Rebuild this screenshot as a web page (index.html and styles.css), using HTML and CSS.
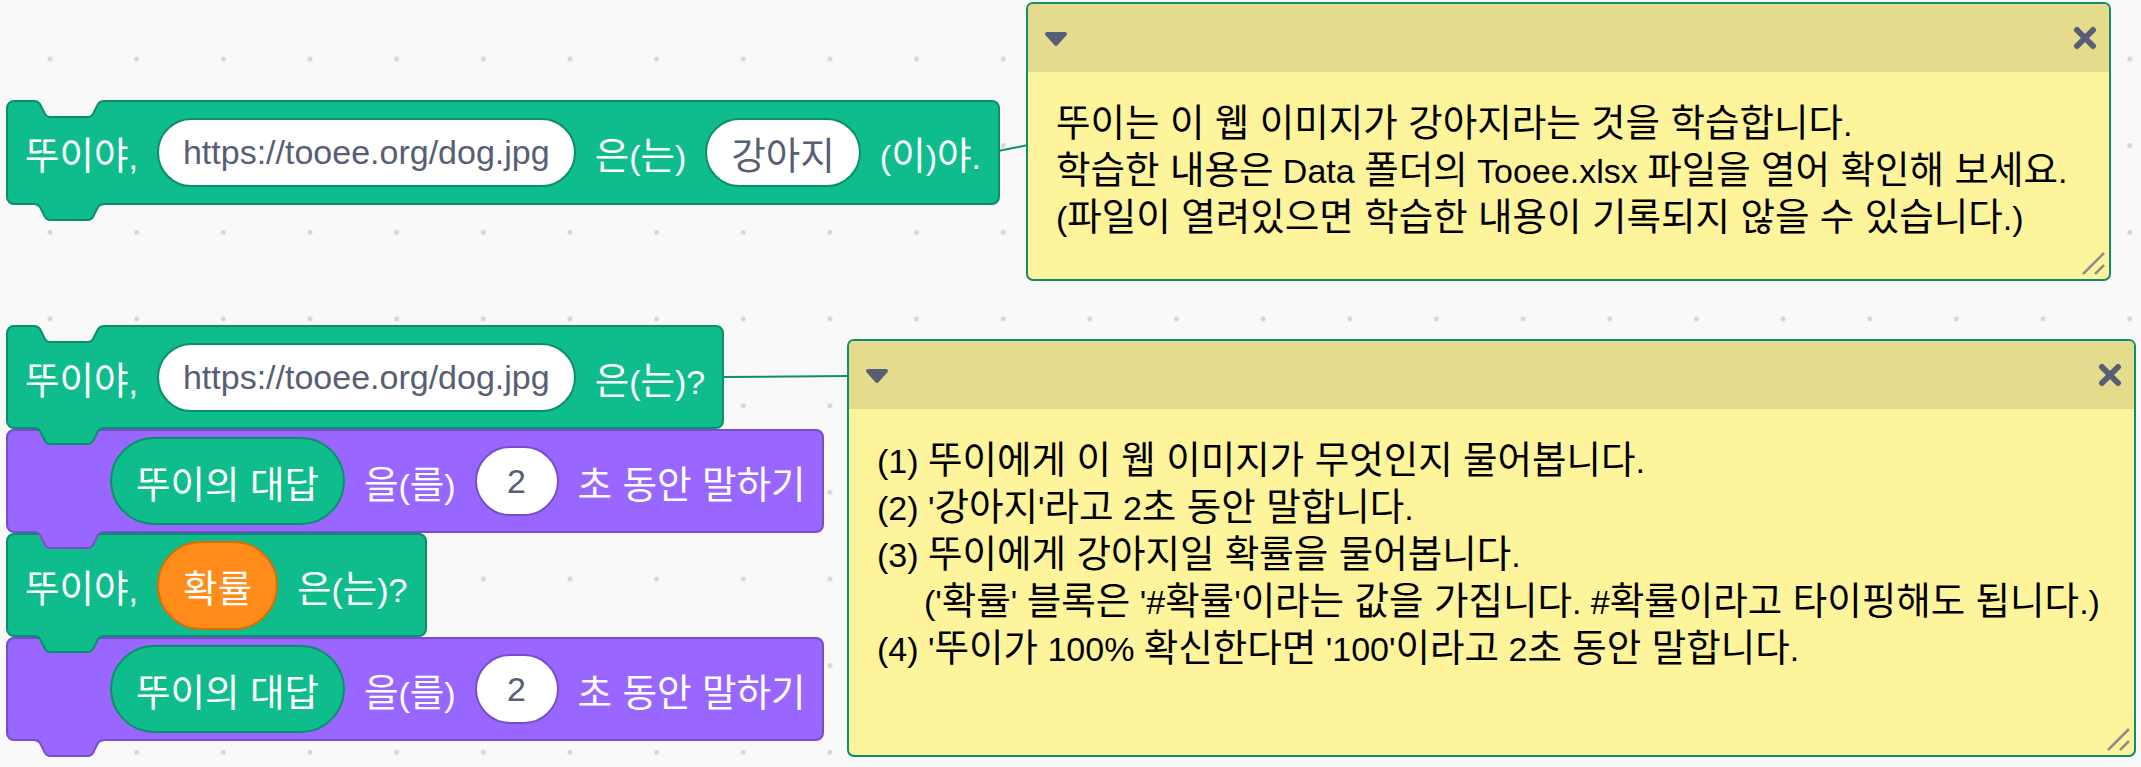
FILE: index.html
```html
<!DOCTYPE html>
<html lang="ko">
<head>
<meta charset="utf-8">
<title>Tooee workspace</title>
<link rel="stylesheet" href="styles.css">
</head>
<body>
<div class="ws">
  <svg class="wires" width="2141" height="767" viewBox="0 0 2141 767">
    <line x1="993" y1="152" x2="1028" y2="145"></line>
    <line x1="722" y1="377" x2="848" y2="376"></line>
  </svg>

  <div class="script s1">
    <div class="blk green tall">
      <svg class="cut" width="70" height="18" viewBox="0 0 70 18"><path class="f" d="M0,0 L0,1 c3,0 4.5,1 6,3 L11,14 c1.2,2 2.5,3 5,3 H54 c2.5,0 3.8,-1 5,-3 L64,4 c1.5,-2 3,-3 6,-3 L70,0 Z"/><path class="s" d="M0,1 c3,0 4.5,1 6,3 L11,14 c1.2,2 2.5,3 5,3 H54 c2.5,0 3.8,-1 5,-3 L64,4 c1.5,-2 3,-3 6,-3"/></svg>
      <span class="lbl"><span class="k">뚜이야</span>,</span>
      <span class="inp">https://tooee.org/dog.jpg</span>
      <span class="lbl"><span class="k">은</span>(<span class="k">는</span>)</span>
      <span class="inp"><span class="k">강아지</span></span>
      <span class="lbl">(<span class="k">이</span>)<span class="k">야</span>.</span>
      <svg class="tab" width="70" height="19" viewBox="0 0 70 19"><path class="f" d="M0,0 L0,1 c3,0 4.5,1 6,3 L11,14 c1.2,2 2.5,3 5,3 H54 c2.5,0 3.8,-1 5,-3 L64,4 c1.5,-2 3,-3 6,-3 L70,0 Z"/><path class="s" d="M0,1 c3,0 4.5,1 6,3 L11,14 c1.2,2 2.5,3 5,3 H54 c2.5,0 3.8,-1 5,-3 L64,4 c1.5,-2 3,-3 6,-3"/></svg>
    </div>
  </div>

  <div class="script s2">
    <div class="blk green">
      <svg class="cut" width="70" height="18" viewBox="0 0 70 18"><path class="f" d="M0,0 L0,1 c3,0 4.5,1 6,3 L11,14 c1.2,2 2.5,3 5,3 H54 c2.5,0 3.8,-1 5,-3 L64,4 c1.5,-2 3,-3 6,-3 L70,0 Z"/><path class="s" d="M0,1 c3,0 4.5,1 6,3 L11,14 c1.2,2 2.5,3 5,3 H54 c2.5,0 3.8,-1 5,-3 L64,4 c1.5,-2 3,-3 6,-3"/></svg>
      <span class="lbl"><span class="k">뚜이야</span>,</span>
      <span class="inp">https://tooee.org/dog.jpg</span>
      <span class="lbl"><span class="k">은</span>(<span class="k">는</span>)?</span>
      <svg class="tab" width="70" height="19" viewBox="0 0 70 19"><path class="f" d="M0,0 L0,1 c3,0 4.5,1 6,3 L11,14 c1.2,2 2.5,3 5,3 H54 c2.5,0 3.8,-1 5,-3 L64,4 c1.5,-2 3,-3 6,-3 L70,0 Z"/><path class="s" d="M0,1 c3,0 4.5,1 6,3 L11,14 c1.2,2 2.5,3 5,3 H54 c2.5,0 3.8,-1 5,-3 L64,4 c1.5,-2 3,-3 6,-3"/></svg>
    </div>
    <div class="blk purple">
      <span class="rep"><span class="k">뚜이의 대답</span></span>
      <span class="lbl"><span class="k">을</span>(<span class="k">를</span>)</span>
      <span class="inp num">2</span>
      <span class="lbl"><span class="k">초 동안 말하기</span></span>
      <svg class="tab" width="70" height="19" viewBox="0 0 70 19"><path class="f" d="M0,0 L0,1 c3,0 4.5,1 6,3 L11,14 c1.2,2 2.5,3 5,3 H54 c2.5,0 3.8,-1 5,-3 L64,4 c1.5,-2 3,-3 6,-3 L70,0 Z"/><path class="s" d="M0,1 c3,0 4.5,1 6,3 L11,14 c1.2,2 2.5,3 5,3 H54 c2.5,0 3.8,-1 5,-3 L64,4 c1.5,-2 3,-3 6,-3"/></svg>
    </div>
    <div class="blk green">
      <span class="lbl"><span class="k">뚜이야</span>,</span>
      <span class="rep orange"><span class="k">확률</span></span>
      <span class="lbl"><span class="k">은</span>(<span class="k">는</span>)?</span>
      <svg class="tab" width="70" height="19" viewBox="0 0 70 19"><path class="f" d="M0,0 L0,1 c3,0 4.5,1 6,3 L11,14 c1.2,2 2.5,3 5,3 H54 c2.5,0 3.8,-1 5,-3 L64,4 c1.5,-2 3,-3 6,-3 L70,0 Z"/><path class="s" d="M0,1 c3,0 4.5,1 6,3 L11,14 c1.2,2 2.5,3 5,3 H54 c2.5,0 3.8,-1 5,-3 L64,4 c1.5,-2 3,-3 6,-3"/></svg>
    </div>
    <div class="blk purple">
      <span class="rep"><span class="k">뚜이의 대답</span></span>
      <span class="lbl"><span class="k">을</span>(<span class="k">를</span>)</span>
      <span class="inp num">2</span>
      <span class="lbl"><span class="k">초 동안 말하기</span></span>
      <svg class="tab" width="70" height="19" viewBox="0 0 70 19"><path class="f" d="M0,0 L0,1 c3,0 4.5,1 6,3 L11,14 c1.2,2 2.5,3 5,3 H54 c2.5,0 3.8,-1 5,-3 L64,4 c1.5,-2 3,-3 6,-3 L70,0 Z"/><path class="s" d="M0,1 c3,0 4.5,1 6,3 L11,14 c1.2,2 2.5,3 5,3 H54 c2.5,0 3.8,-1 5,-3 L64,4 c1.5,-2 3,-3 6,-3"/></svg>
    </div>
  </div>

  <div class="comment c1">
    <div class="chead">
      <svg class="tri" width="24" height="17" viewBox="0 0 24 17"><path d="M3,3 L21,3 L12,13 Z"/></svg>
      <svg class="close" width="24" height="24" viewBox="0 0 24 24"><path d="M4,4 L20,20 M20,4 L4,20"/></svg>
    </div>
    <div class="cbody">
      <p><span class="k">뚜이는 이 웹 이미지가 강아지라는 것을 학습합니다</span>.</p>
      <p><span class="k">학습한 내용은</span> Data <span class="k">폴더의</span> Tooee.xlsx <span class="k">파일을 열어 확인해 보세요</span>.</p>
      <p>(<span class="k">파일이 열려있으면 학습한 내용이 기록되지 않을 수 있습니다</span>.)</p>
    </div>
    <svg class="grip" width="30" height="30" viewBox="0 0 30 30"><path d="M4,25 L25,4 M16,25 L25,16"/></svg>
  </div>

  <div class="comment c2">
    <div class="chead">
      <svg class="tri" width="24" height="17" viewBox="0 0 24 17"><path d="M3,3 L21,3 L12,13 Z"/></svg>
      <svg class="close" width="24" height="24" viewBox="0 0 24 24"><path d="M4,4 L20,20 M20,4 L4,20"/></svg>
    </div>
    <div class="cbody">
      <p>(1) <span class="k">뚜이에게 이 웹 이미지가 무엇인지 물어봅니다</span>.</p>
      <p>(2) '<span class="k">강아지</span>'<span class="k">라고</span> 2<span class="k">초 동안 말합니다</span>.</p>
      <p>(3) <span class="k">뚜이에게 강아지일 확률을 물어봅니다</span>.</p>
      <p class="indent">('<span class="k">확률</span>' <span class="k">블록은</span> '#<span class="k">확률</span>'<span class="k">이라는 값을 가집니다</span>. #<span class="k">확률이라고 타이핑해도 됩니다</span>.)</p>
      <p>(4) '<span class="k">뚜이가</span> 100% <span class="k">확신한다면</span> '100'<span class="k">이라고</span> 2<span class="k">초 동안 말합니다</span>.</p>
    </div>
    <svg class="grip" width="30" height="30" viewBox="0 0 30 30"><path d="M4,25 L25,4 M16,25 L25,16"/></svg>
  </div>
</div>
</body>
</html>
```

FILE: styles.css
```css
html, body {
  margin: 0;
  padding: 0;
}

body {
  width: 2141px;
  height: 767px;
  overflow: hidden;
  background-color: #F9F9F9;
  background-image: radial-gradient(circle at center, #D6D6D6 0, #D6D6D6 2px, rgba(214,214,214,0) 3px);
  background-size: 86.67px 86.67px;
  background-position: 6.7px 15.7px;
  font-family: "Liberation Sans", "Noto Sans CJK KR", sans-serif;
}

.ws {
  position: relative;
  width: 2141px;
  height: 767px;
}

.wires {
  position: absolute;
  left: 0;
  top: 0;
}

.wires line {
  stroke: #0F8E6B;
  stroke-width: 2;
}

/* Hangul runs: the fallback CJK face is a bit narrower than the reference one */
.k {
  font-size: 37.5px;
}

/* ---------- blocks ---------- */
.script {
  position: absolute;
  display: flex;
  flex-direction: column;
  align-items: flex-start;
}

.s1 { left: 6px; top: 100px; }
.s2 { left: 6px; top: 325px; }

.blk {
  position: relative;
  display: flex;
  align-items: center;
  gap: 19px;
  box-sizing: border-box;
  height: 104px;
  padding: 0 17px;
  border: 2px solid;
  border-radius: 8px;
  color: #FFFFFF;
  font-size: 34px;
  white-space: nowrap;
}

.blk.tall { height: 105px; }

.green {
  background: #0FBD8C;
  border-color: #0B8E69;
}

.purple {
  background: #9966FF;
  border-color: #774DCB;
  padding-left: 102px;
}

.lbl {
  line-height: normal;
}

.inp {
  display: flex;
  align-items: center;
  justify-content: center;
  box-sizing: border-box;
  height: 69px;
  padding: 0 24px;
  background: #FFFFFF;
  border: 2px solid #0B8E69;
  border-radius: 35px;
  color: #575E75;
}

.inp.num {
  height: 70px;
  min-width: 84px;
  padding: 0;
  border-color: #774DCB;
}

.rep {
  display: flex;
  align-items: center;
  box-sizing: border-box;
  height: 88px;
  padding: 0 24px;
  background: #0FBD8C;
  border: 2px solid #0B8E69;
  border-radius: 44px;
  color: #FFFFFF;
}

.rep.orange {
  height: 89px;
  padding: 0 24px;
  background: #FF8C1A;
  border-color: #DB6E00;
}

/* notch cut-out and bottom tab */
.cut {
  position: absolute;
  left: 26px;
  top: -2px;
  z-index: 2;
}

.tab {
  position: absolute;
  left: 26px;
  top: 100%;
  z-index: 3;
}

.cut .f { fill: #F9F9F9; }
.cut .s, .tab .s { fill: none; stroke-width: 2; }
.green .cut .s, .green .tab .s { stroke: #0B8E69; }
.green .tab .f { fill: #0FBD8C; }
.purple .tab .s { stroke: #774DCB; }
.purple .tab .f { fill: #9966FF; }

/* ---------- comments ---------- */
.comment {
  position: absolute;
  box-sizing: border-box;
  display: flex;
  flex-direction: column;
  border: 2px solid #0F8E6B;
  border-radius: 7px;
  background: #FEF49C;
  overflow: hidden;
  font-size: 34px;
  color: #000000;
}

.c1 { left: 1026px; top: 2px; width: 1085px; height: 279px; }
.c2 { left: 847px; top: 339px; width: 1289px; height: 418px; }

.chead {
  flex: none;
  height: 68px;
  display: flex;
  align-items: center;
  justify-content: space-between;
  padding: 0 12px 0 16px;
  background: #E4DB8C;
}

.tri {
  margin-top: 3px;
}

.tri path {
  fill: #575E75;
  stroke: #575E75;
  stroke-width: 4;
  stroke-linejoin: round;
}

.close path {
  fill: none;
  stroke: #575E75;
  stroke-width: 6;
  stroke-linecap: round;
}

.cbody {
  padding: 28px 28px;
  line-height: 46px;
  white-space: nowrap;
}

.cbody p {
  margin: 0;
}

.cbody .indent {
  padding-left: 47px;
}

.grip {
  position: absolute;
  right: 0;
  bottom: 0;
}

.grip path {
  fill: none;
  stroke: #8E8E8E;
  stroke-width: 2.5;
}
```
